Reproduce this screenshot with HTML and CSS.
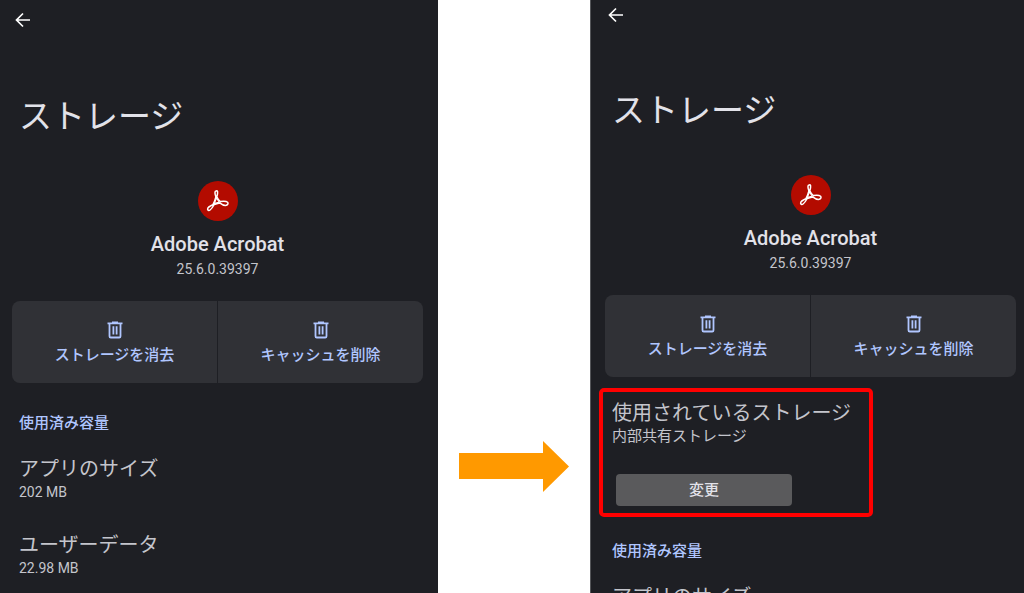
FILE: index.html
```html
<!DOCTYPE html>
<html lang="ja">
<head>
<meta charset="utf-8">
<meta name="viewport" content="width=device-width, initial-scale=1">
<title>ストレージ</title>
<link rel="stylesheet" href="styles.css">
</head>
<body>
<svg class="defs" aria-hidden="true">
  <symbol id="back" viewBox="0 0 16 16"><path d="M15 8H2M8 1.500L1.500 8L8 14.500" fill="none" stroke="currentColor" stroke-width="1.700"/></symbol>
  <symbol id="trash" viewBox="0 0 16 18"><path d="M.5 2.300H15.500M5 1.300H11M2.500 2.500V15.200Q2.500 16.500 3.800 16.500H12.200Q13.500 16.500 13.500 15.200V2.500M6.400 5.200V13.600M9.600 5.200V13.600" fill="none" stroke="currentColor" stroke-width="1.800"/></symbol>
  <symbol id="acrobat" viewBox="0 0 40 40"><circle cx="20" cy="20" r="20" fill="#b30b00"/><path d="M29.600 21.300C27.800 19.500 23.500 20.300 22.200 20.500C20.300 18.700 19.300 16.900 18.800 15.700C19.400 13.800 19.800 11.800 19.600 10.700C19.200 9.400 17.200 9.700 17 11.100C16.800 12.500 17.300 14.400 17.900 16C17.300 18.500 16 21.700 14.800 23.800C12.300 24.900 9.800 26.500 9.600 28C9.500 29.200 10.800 29.900 12.100 29C13.600 28 15.200 25.300 16.200 23.500C18.200 22.700 20.300 22.200 21.700 21.900C24 23.800 26 24.400 27.500 24.400C30 24.300 30.500 22.300 29.600 21.300Z" fill="none" stroke="#fff" stroke-width="1.500" stroke-linejoin="round"/><path d="M18.400 17L21.300 21.100L16.300 22.600Z" fill="#b30b00" stroke="#fff" stroke-width="1.200"/></symbol>
</svg>
<main class="compare">
  <section class="screen screen-before">
    <header class="bar"><button class="back" type="button" aria-label="戻る"><svg class="back-icon"><use href="#back"/></svg></button></header>
    <h1 class="title">ストレージ</h1>
    <div class="app">
      <svg class="app-icon" aria-hidden="true"><use href="#acrobat"/></svg>
      <h2 class="app-name">Adobe Acrobat</h2>
      <p class="app-version">25.6.0.39397</p>
    </div>
    <div class="actions">
      <button class="action" type="button"><svg class="trash-icon" aria-hidden="true"><use href="#trash"/></svg><span>ストレージを消去</span></button>
      <button class="action" type="button"><svg class="trash-icon" aria-hidden="true"><use href="#trash"/></svg><span>キャッシュを削除</span></button>
    </div>
    <h3 class="category">使用済み容量</h3>
    <div class="item"><p class="item-title">アプリのサイズ</p><p class="item-size">202 MB</p></div>
    <div class="item"><p class="item-title">ユーザーデータ</p><p class="item-size">22.98 MB</p></div>
  </section>
  <div class="between">
    <svg class="arrow" viewBox="0 0 110 52" aria-hidden="true"><path d="M0 13H84V1L110 26.500L84 52V39H0Z" fill="#ff9900"/></svg>
  </div>
  <section class="screen screen-after">
    <header class="bar"><button class="back" type="button" aria-label="戻る"><svg class="back-icon"><use href="#back"/></svg></button></header>
    <h1 class="title">ストレージ</h1>
    <div class="app">
      <svg class="app-icon" aria-hidden="true"><use href="#acrobat"/></svg>
      <h2 class="app-name">Adobe Acrobat</h2>
      <p class="app-version">25.6.0.39397</p>
    </div>
    <div class="actions">
      <button class="action" type="button"><svg class="trash-icon" aria-hidden="true"><use href="#trash"/></svg><span>ストレージを消去</span></button>
      <button class="action" type="button"><svg class="trash-icon" aria-hidden="true"><use href="#trash"/></svg><span>キャッシュを削除</span></button>
    </div>
    <div class="highlight">
      <p class="item-title">使用されているストレージ</p>
      <p class="item-value">内部共有ストレージ</p>
      <button class="change" type="button">変更</button>
    </div>
    <h3 class="category">使用済み容量</h3>
    <div class="item"><p class="item-title">アプリのサイズ</p></div>
  </section>
</main>
</body>
</html>
```
FILE: styles.css
```css
* { box-sizing: border-box; margin: 0; }
body { background: #fff; color: #c4c5cc; font-family: Roboto, "Noto Sans CJK JP", sans-serif; }
button { border: 0; padding: 0; background: none; color: inherit; font: inherit; }
svg { display: block; }
.defs { position: absolute; width: 0; height: 0; }
.compare { display: grid; grid-template-columns: 438fr 152fr 434fr; height: 100vh; overflow: hidden; }
.screen { min-width: 0; overflow: hidden; background: #1e1f24; }
.screen-before { padding: 0 15px 0 12px; }
.screen-after { padding: 0 8px 0 14px; border-left: 1px solid #55565a; }
.bar { display: flex; align-items: center; height: 40px; padding-left: 3px; color: #fff; }
.screen-after .bar { height: 30px; }
.back-icon { width: 16px; height: 16px; }
.title { margin: 57px 0 0 7px; color: #e2e2e9; font-size: 33px; font-weight: 400; line-height: 40px; }
.screen-after .title { margin-top: 61px; }
.app { display: flex; flex-direction: column; align-items: center; margin-top: 44px; }
.app-icon { width: 40px; height: 40px; }
.app-name { margin-top: 10px; color: #e2e2e9; font-size: 20px; font-weight: 500; line-height: 26px; }
.app-version { margin-top: 2px; font-size: 14px; line-height: 20px; }
.actions { display: grid; grid-template-columns: 1fr 1fr; gap: 1px; margin-top: 22px; border-radius: 8px; overflow: hidden; }
.action { display: flex; flex-direction: column; align-items: center; gap: 6px; padding: 20px 0 18px; background: #303136; color: #b0c6ff; font-size: 15px; font-weight: 500; line-height: 20px; }
.trash-icon { width: 16px; height: 18px; }
.category { margin: 30px 0 23px 7px; color: #b0c6ff; font-size: 15px; font-weight: 500; line-height: 20px; }
.item { margin: 0 0 30px 7px; }
.item-title { font-size: 20px; line-height: 26px; }
.item-value { font-size: 15px; line-height: 20px; }
.item-size { font-size: 14px; line-height: 20px; }
.highlight { width: 274px; margin: 11px 0 0 -6px; padding: 8px 9px 7px; border: 4px solid #f00; border-radius: 5px; }
.change { display: block; width: 176px; margin: 28px 0 0 4px; border-radius: 4px; background: #5a5a5c; color: #e2e2e9; font-size: 15px; font-weight: 500; line-height: 32px; }
.screen-after .category { margin-top: 24px; }
.between { display: flex; justify-content: center; padding-top: 440px; }
.arrow { width: 110px; height: 52px; }
```
